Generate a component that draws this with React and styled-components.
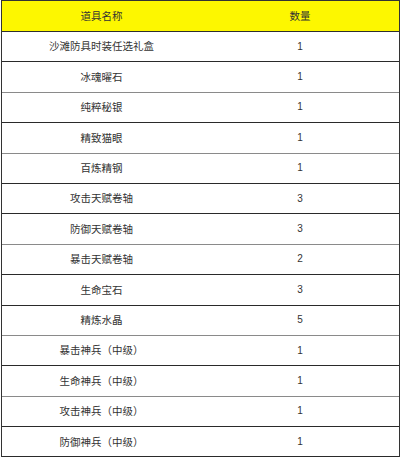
import React from 'react'
import styled, { createGlobalStyle } from 'styled-components'

const GlobalStyle = createGlobalStyle`
  html, body {
    margin: 0;
    padding: 0;
    background: #ffffff;
  }
  body {
    font-family: "Liberation Sans", "Noto Sans CJK SC", sans-serif;
  }
`

const items = [
  { name: '沙滩防具时装任选礼盒', count: 1, line: 'dark' },
  { name: '冰魂曜石', count: 1, line: 'light' },
  { name: '纯粹秘银', count: 1, line: 'dark' },
  { name: '精致猫眼', count: 1, line: 'light' },
  { name: '百炼精钢', count: 1, line: 'dark' },
  { name: '攻击天赋卷轴', count: 3, line: 'dark' },
  { name: '防御天赋卷轴', count: 3, line: 'light' },
  { name: '暴击天赋卷轴', count: 2, line: 'dark' },
  { name: '生命宝石', count: 3, line: 'dark' },
  { name: '精炼水晶', count: 5, line: 'light' },
  { name: '暴击神兵（中级）', count: 1, line: 'dark' },
  { name: '生命神兵（中级）', count: 1, line: 'light' },
  { name: '攻击神兵（中级）', count: 1, line: 'dark' },
  { name: '防御神兵（中级）', count: 1, line: 'dark' }
]

export default function App() {
  return (
    <>
      <GlobalStyle />
      <Table>
        <HeaderRow>
          <Cell>道具名称</Cell>
          <Cell>数量</Cell>
        </HeaderRow>
        {items.map((item, index) => (
          <Row key={index} $line={item.line}>
            <Cell>{item.name}</Cell>
            <Cell $num>{item.count}</Cell>
          </Row>
        ))}
      </Table>
    </>
  )
}

const Table = styled.div`
  box-sizing: border-box;
  width: 399px;
  margin-left: 1px;
  border: 1px solid #333;
  border-bottom: none;
  display: flex;
  flex-direction: column;
`

const HeaderRow = styled.div`
  display: grid;
  grid-template-columns: 199px 1fr;
  height: 31px;
  box-sizing: border-box;
  background: #fdf700;
  border-bottom: 1px solid #2e2e2e;
`

const Row = styled.div`
  display: grid;
  grid-template-columns: 199px 1fr;
  height: 30.4px;
  box-sizing: border-box;
  background: #ffffff;
  border-bottom: 1px solid ${p => (p.$line === 'light' ? '#8a8a8a' : '#2a2a2a')};
`

const Cell = styled.div`
  display: flex;
  align-items: center;
  justify-content: center;
  font-family: ${p =>
    p.$num
      ? '"Liberation Sans", Arial, sans-serif'
      : '"Noto Sans CJK SC", "Liberation Sans", sans-serif'};
  font-size: ${p => (p.$num ? '10px' : '10.5px')};
  color: #333;
  line-height: 1;
`
